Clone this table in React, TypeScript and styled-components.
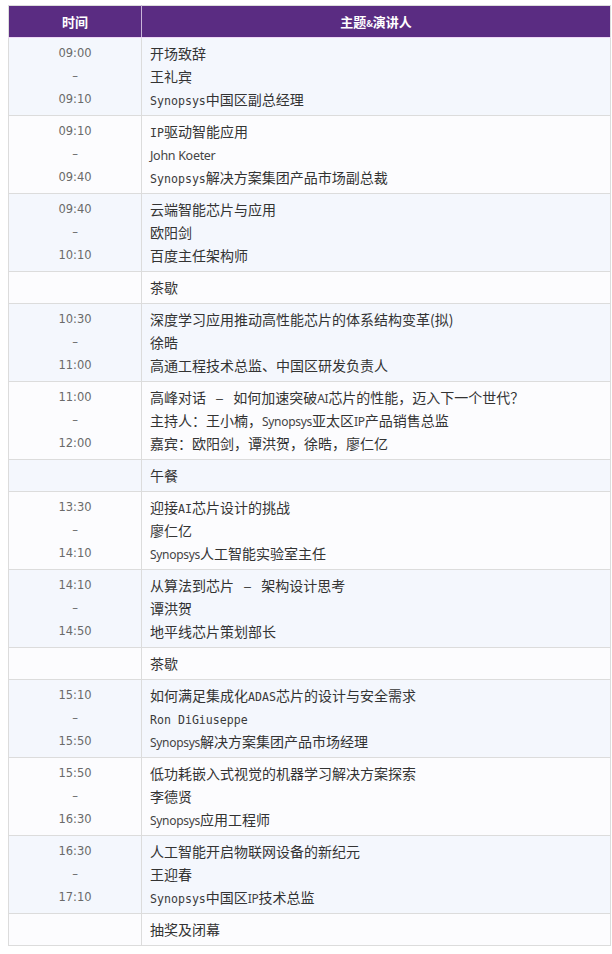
import React, { FC, ReactNode } from 'react'
import styled, { createGlobalStyle } from 'styled-components'

const GlobalStyle = createGlobalStyle`
  body {
    margin: 0;
    background: #ffffff;
    font-family: "Noto Sans CJK SC", "Noto Sans", sans-serif;
  }
`

const Page = styled.div`
  padding: 5px 0 0 8px;
`

const Table = styled.table`
  width: 603px;
  border-collapse: collapse;
  table-layout: fixed;
  border: 1px solid #dcdcdc;
`

const HeadCell = styled.th<{ $width?: number }>`
  width: ${(p) => (p.$width ? `${p.$width}px` : 'auto')};
  height: 31px;
  padding: 0;
  background: #5a2c82;
  color: #ffffff;
  font-size: 13px;
  font-weight: 700;
  text-align: center;
  border-right: 1px solid #c9b6d9;
  border-bottom: 1px solid #eed8f6;

  &:last-child {
    border-right: 0;
  }
`

const Row = styled.tr<{ $tinted: boolean }>`
  background: ${(p) => (p.$tinted ? '#f4f7fd' : '#fcfcfe')};
  border-bottom: 1px solid #dcdcdc;
`

const TimeCell = styled.td`
  padding: 4px 0;
  text-align: center;
  vertical-align: top;
  border-right: 1px solid #dcdcdc;
  font-family: "DejaVu Sans", Verdana, sans-serif;
  font-size: 11.5px;
  line-height: 23px;
  color: #6a6a6a;
`

const TopicCell = styled.td`
  padding: 4px 8px;
  vertical-align: top;
  font-size: 14px;
  line-height: 23px;
  color: #333333;
  white-space: nowrap;
`

const Line = styled.div`
  height: 23px;
`

const Mono = styled.span`
  font-family: "DejaVu Sans Mono", "Liberation Mono", monospace;
  font-size: 11.6px;
  color: #3a3a3a;
`

const Sans = styled.span<{ $size?: number }>`
  font-family: "Noto Sans", "Open Sans", sans-serif;
  font-size: ${(p) => p.$size ?? 12}px;
  letter-spacing: -0.3px;
  color: #444444;
`

const Amp = styled.span`
  font-size: 9px;
`

interface Session {
  time?: [string, string]
  lines: ReactNode[]
}

const sessions: Session[] = [
  {
    time: ['09:00', '09:10'],
    lines: ['开场致辞', '王礼宾', <><Mono>Synopsys</Mono>中国区副总经理</>],
  },
  {
    time: ['09:10', '09:40'],
    lines: [
      <><Mono>IP</Mono>驱动智能应用</>,
      <Sans $size={12.5}>John Koeter</Sans>,
      <><Mono>Synopsys</Mono>解决方案集团产品市场副总裁</>,
    ],
  },
  {
    time: ['09:40', '10:10'],
    lines: ['云端智能芯片与应用', '欧阳剑', '百度主任架构师'],
  },
  { lines: ['茶歇'] },
  {
    time: ['10:30', '11:00'],
    lines: ['深度学习应用推动高性能芯片的体系结构变革(拟)', '徐晧', '高通工程技术总监、中国区研发负责人'],
  },
  {
    time: ['11:00', '12:00'],
    lines: [
      <>高峰对话&nbsp;<Mono>&nbsp;–&nbsp;</Mono>&nbsp;如何加速突破<Sans>AI</Sans>芯片的性能，迈入下一个世代？</>,
      <>主持人：王小楠，<Sans>Synopsys</Sans>亚太区<Sans>IP</Sans>产品销售总监</>,
      '嘉宾：欧阳剑，谭洪贺，徐晧，廖仁亿',
    ],
  },
  { lines: ['午餐'] },
  {
    time: ['13:30', '14:10'],
    lines: [
      <>迎接<Mono>AI</Mono>芯片设计的挑战</>,
      '廖仁亿',
      <><Sans>Synopsys</Sans>人工智能实验室主任</>,
    ],
  },
  {
    time: ['14:10', '14:50'],
    lines: [<>从算法到芯片&nbsp;<Mono>&nbsp;–&nbsp;</Mono>&nbsp;架构设计思考</>, '谭洪贺', '地平线芯片策划部长'],
  },
  { lines: ['茶歇'] },
  {
    time: ['15:10', '15:50'],
    lines: [
      <>如何满足集成化<Mono>ADAS</Mono>芯片的设计与安全需求</>,
      <Mono>Ron DiGiuseppe</Mono>,
      <><Sans>Synopsys</Sans>解决方案集团产品市场经理</>,
    ],
  },
  {
    time: ['15:50', '16:30'],
    lines: ['低功耗嵌入式视觉的机器学习解决方案探索', '李德贤', <><Sans>Synopsys</Sans>应用工程师</>],
  },
  {
    time: ['16:30', '17:10'],
    lines: [
      '人工智能开启物联网设备的新纪元',
      '王迎春',
      <><Mono>Synopsys</Mono>中国区<Sans>IP</Sans>技术总监</>,
    ],
  },
  { lines: ['抽奖及闭幕'] },
]

const App: FC = () => {
  return (
    <Page>
      <GlobalStyle />
      <Table>
        <thead>
          <tr>
            <HeadCell $width={132}>时间</HeadCell>
            <HeadCell>
              主题<Amp>&amp;</Amp>演讲人
            </HeadCell>
          </tr>
        </thead>
        <tbody>
          {sessions.map((s, i) => (
            <Row key={i} $tinted={i % 2 === 0}>
              <TimeCell>
                {s.time && (
                  <>
                    <Line>{s.time[0]}</Line>
                    <Line>–</Line>
                    <Line>{s.time[1]}</Line>
                  </>
                )}
              </TimeCell>
              <TopicCell>
                {s.lines.map((line, j) => (
                  <Line key={j}>{line}</Line>
                ))}
              </TopicCell>
            </Row>
          ))}
        </tbody>
      </Table>
    </Page>
  )
}

export default App
